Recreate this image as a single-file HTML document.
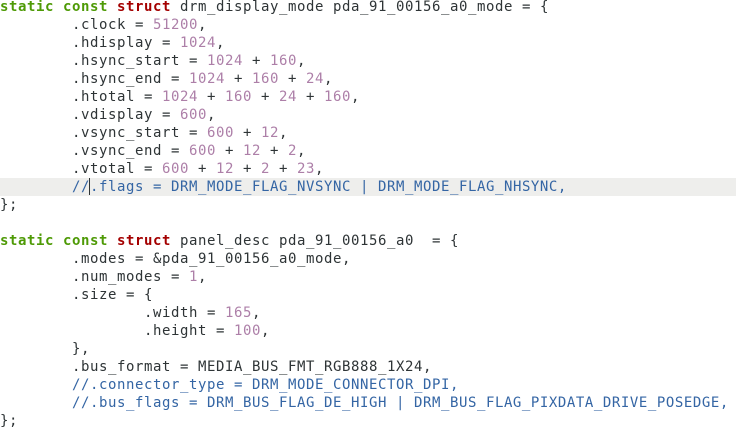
<!DOCTYPE html>
<html><head><meta charset="utf-8"><style>
html,body{margin:0;padding:0;background:#fff;width:736px;height:434px;overflow:hidden}
pre{margin:0;position:absolute;top:-2px;left:0;font-family:"DejaVu Sans Mono","Liberation Mono",monospace;font-size:14px;letter-spacing:0.57px;line-height:18px;color:#2e3436;width:736px}
.l{display:block;height:18px;white-space:pre}
.hl{background:#eeeeec}
.k{color:#4e9a06;font-weight:bold}
.s{color:#a40000;font-weight:bold}
.n{color:#ad7fa8}
.c{color:#3465a4}
.cur{display:inline-block;width:0;height:17px;border-left:1px solid #2e3436;vertical-align:top;margin-left:-1px}
</style></head><body><pre><span class="l"><span class="k">static</span> <span class="k">const</span> <span class="s">struct</span> drm_display_mode pda_91_00156_a0_mode = {</span><span class="l">        .clock = <span class="n">51200</span>,</span><span class="l">        .hdisplay = <span class="n">1024</span>,</span><span class="l">        .hsync_start = <span class="n">1024</span> + <span class="n">160</span>,</span><span class="l">        .hsync_end = <span class="n">1024</span> + <span class="n">160</span> + <span class="n">24</span>,</span><span class="l">        .htotal = <span class="n">1024</span> + <span class="n">160</span> + <span class="n">24</span> + <span class="n">160</span>,</span><span class="l">        .vdisplay = <span class="n">600</span>,</span><span class="l">        .vsync_start = <span class="n">600</span> + <span class="n">12</span>,</span><span class="l">        .vsync_end = <span class="n">600</span> + <span class="n">12</span> + <span class="n">2</span>,</span><span class="l">        .vtotal = <span class="n">600</span> + <span class="n">12</span> + <span class="n">2</span> + <span class="n">23</span>,</span><span class="l hl">        <span class="c">//<span class="cur"></span>.flags = DRM_MODE_FLAG_NVSYNC | DRM_MODE_FLAG_NHSYNC,</span></span><span class="l">};</span><span class="l"> </span><span class="l"><span class="k">static</span> <span class="k">const</span> <span class="s">struct</span> panel_desc pda_91_00156_a0  = {</span><span class="l">        .modes = &amp;pda_91_00156_a0_mode,</span><span class="l">        .num_modes = <span class="n">1</span>,</span><span class="l">        .size = {</span><span class="l">                .width = <span class="n">165</span>,</span><span class="l">                .height = <span class="n">100</span>,</span><span class="l">        },</span><span class="l">        .bus_format = MEDIA_BUS_FMT_RGB888_1X24,</span><span class="l">        <span class="c">//.connector_type = DRM_MODE_CONNECTOR_DPI,</span></span><span class="l">        <span class="c">//.bus_flags = DRM_BUS_FLAG_DE_HIGH | DRM_BUS_FLAG_PIXDATA_DRIVE_POSEDGE,</span></span><span class="l">};</span></pre></body></html>
